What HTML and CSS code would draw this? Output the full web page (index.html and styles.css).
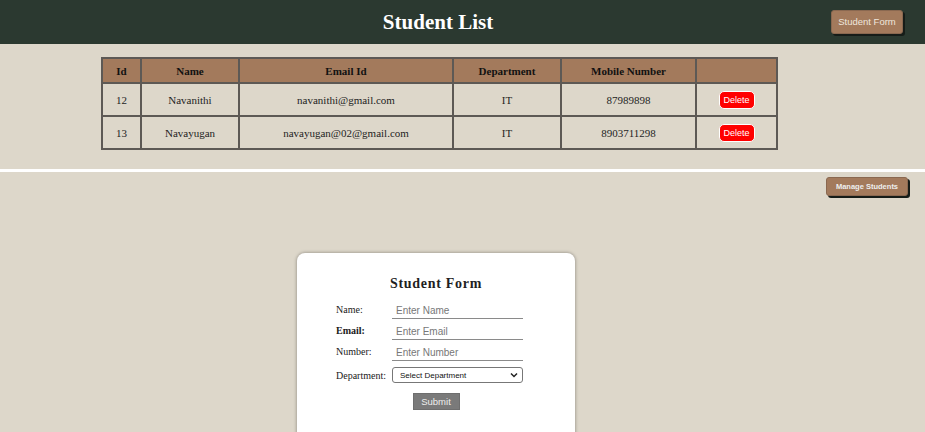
FILE: index.html
```html
<!DOCTYPE html>
<html>
<head>
<meta charset="utf-8">
<link rel="stylesheet" href="styles.css">
</head>
<body>
<header class="topbar">
  <h1 class="title">Student List</h1>
  <button class="btn-brown btn-top">Student Form</button>
</header>
<section class="list-section">
  <table class="students">
    <colgroup>
      <col class="c-id"><col class="c-name"><col class="c-email"><col class="c-dept"><col class="c-mob"><col class="c-act">
    </colgroup>
    <thead>
      <tr><th>Id</th><th>Name</th><th>Email Id</th><th>Department</th><th>Mobile Number</th><th></th></tr>
    </thead>
    <tbody>
      <tr><td>12</td><td>Navanithi</td><td>navanithi@gmail.com</td><td>IT</td><td>87989898</td><td><button class="btn-del">Delete</button></td></tr>
      <tr><td>13</td><td>Navayugan</td><td>navayugan@02@gmail.com</td><td>IT</td><td>8903711298</td><td><button class="btn-del">Delete</button></td></tr>
    </tbody>
  </table>
</section>
<section class="form-section">
  <div class="manage-row"><button class="btn-brown btn-manage">Manage Students</button></div>
  <div class="card">
    <h2 class="card-title">Student Form</h2>
    <div class="frow"><label>Name:</label><input class="inp" placeholder="Enter Name"></div>
    <div class="frow"><label class="bold">Email:</label><input class="inp" placeholder="Enter Email"></div>
    <div class="frow"><label>Number:</label><input class="inp" placeholder="Enter Number"></div>
    <div class="frow srow"><label>Department:</label>
      <div class="sel"><span>Select Department</span>
        <svg width="8" height="6" viewBox="0 0 8 6"><path d="M1 1.5 L4 4.5 L7 1.5" fill="none" stroke="#222" stroke-width="1.5"/></svg>
      </div>
    </div>
    <div class="subrow"><button class="btn-submit">Submit</button></div>
  </div>
</section>
</body>
</html>
```
FILE: styles.css
```css
html, body { margin: 0; padding: 0; }
body { background: #ddd7ca; font-family: "Liberation Serif", serif; overflow: hidden; height: 432px; }

.topbar {
  height: 44px;
  background: #2b3930;
  display: flex;
  align-items: center;
  padding-right: 22px;
}
.title {
  flex: 1;
  margin: 0;
  padding-left: 45px;
  text-align: center;
  color: #fff;
  font-size: 21px;
  font-weight: bold;
  font-family: "Liberation Serif", serif;
}
.btn-brown {
  background: #a37a5c;
  color: #efe6dc;
  font-family: "Liberation Sans", Arial, sans-serif;
  border: 1px solid #8a6850;
  border-radius: 3px;
  box-shadow: 2px 2px 0 #161c18;
  padding: 0;
  cursor: pointer;
}
.btn-top { width: 72px; height: 24px; font-size: 9.5px; margin-top: -1px; }

.list-section {
  height: 128px;
  padding-top: 13px;
  box-sizing: border-box;
  border-bottom: 3px solid #ffffff;
}
.students {
  margin-left: 101px;
  width: 675px;
  border-collapse: collapse;
  table-layout: fixed;
  border: 2px solid #5d5955;
  font-size: 11px;
  color: #1e1e1e;
}
.c-id { width: 39px; } .c-name { width: 98px; } .c-email { width: 214px; }
.c-dept { width: 108px; } .c-mob { width: 135px; } .c-act { width: 81px; }
.students th, .students td {
  border: 2px solid #5d5955;
  text-align: center;
  padding: 0;
}
.students th { background: #a37a5c; height: 23px; font-weight: bold; color: #111; }
.students td { height: 31px; }
.btn-del {
  background: #ff0000;
  color: #fff;
  border: 1px solid #fff;
  border-radius: 5px;
  font-family: "Liberation Sans", Arial, sans-serif;
  font-size: 9px;
  width: 36px;
  height: 18px;
  padding: 0;
}

.form-section { height: 260px; }
.manage-row { display: flex; justify-content: flex-end; padding: 5px 17px 0 0; }
.btn-manage { width: 82px; height: 19px; font-size: 7.5px; font-weight: bold; color: #eee; }

.card {
  margin: 57px 0 0 297px;
  width: 278px;
  height: 190px;
  background: #fff;
  border-radius: 8px;
  box-shadow: 0 0 3px 1px #a9a49a;
  box-sizing: border-box;
  padding: 23px 0 0 39px;
}
.card-title {
  margin: 0 0 6px -39px;
  text-align: center;
  font-size: 14px;
  font-weight: bold;
  color: #1f1f1f;
  letter-spacing: 0.7px;
}
.frow { display: flex; align-items: flex-end; height: 21px; }
.frow label { width: 56px; font-size: 10px; color: #1a1a1a; padding-bottom: 4px; }
.frow label.bold { font-weight: bold; font-size: 10px; }
.inp {
  width: 131px;
  height: 17px;
  box-sizing: border-box;
  border: none;
  border-bottom: 1px solid #8a8a8a;
  padding: 0 4px;
  font-family: "Liberation Sans", Arial, sans-serif;
  font-size: 10px;
  outline: none;
}
.inp::placeholder { color: #777; }
.srow { height: 24px; align-items: center; margin-top: 2px; }
.srow label { padding-bottom: 0; width: 56px; font-size: 10px; }
.sel {
  width: 131px;
  height: 16px;
  box-sizing: border-box;
  border: 1px solid #777;
  border-radius: 3px;
  display: flex;
  align-items: center;
  justify-content: space-between;
  padding: 0 4px 0 7px;
  font-family: "Liberation Sans", Arial, sans-serif;
  font-size: 8px;
  color: #111;
}
.subrow { display: flex; justify-content: center; margin: 6px 0 0 -39px; }
.btn-submit {
  width: 47px;
  height: 17px;
  background: #7a7a7a;
  color: #eee;
  border: 1px solid #6e6e6e;
  padding: 0;
  font-family: "Liberation Sans", Arial, sans-serif;
  font-size: 9.5px;
}
```
